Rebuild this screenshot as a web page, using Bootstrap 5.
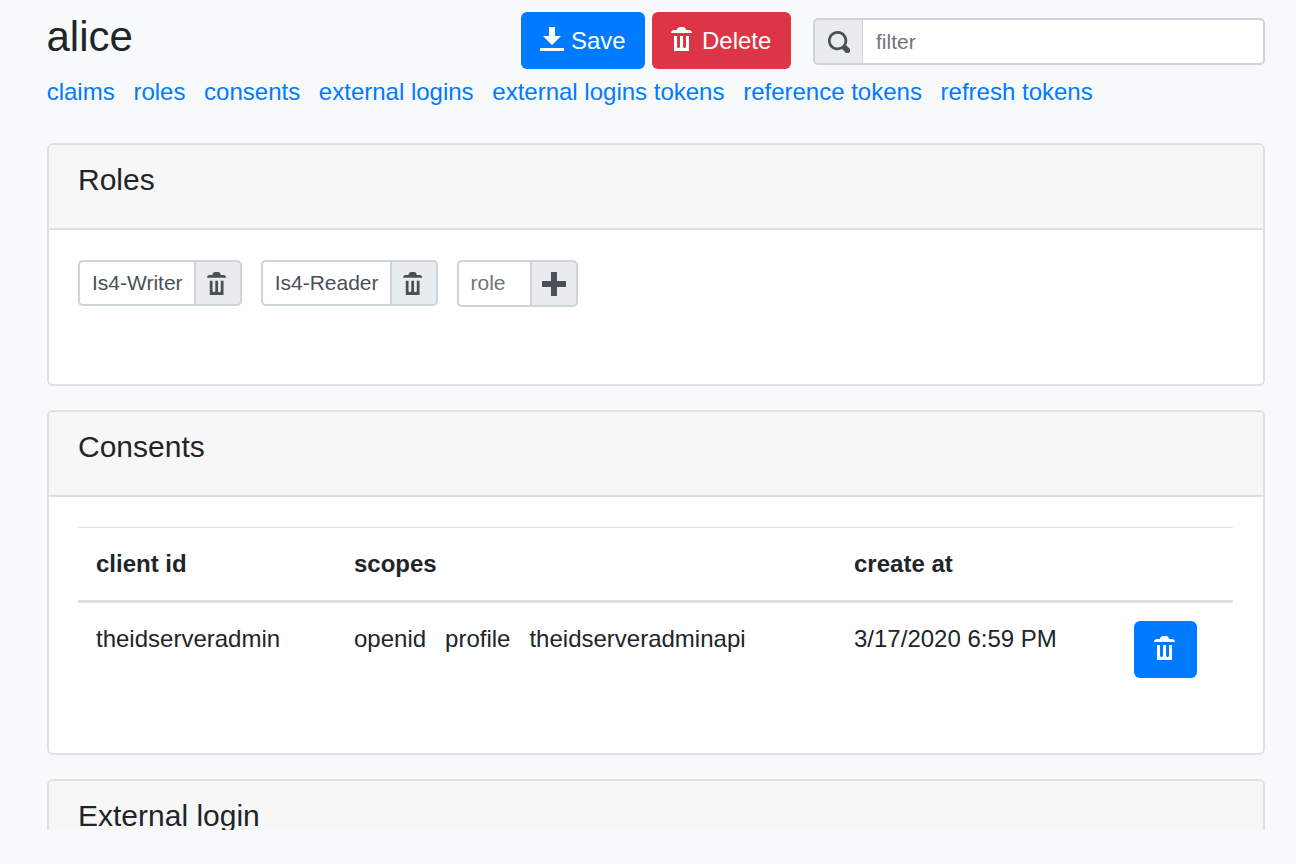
<!DOCTYPE html>
<html lang="en">
<head>
<meta charset="utf-8">
<title>alice</title>
<link href="https://cdn.jsdelivr.net/npm/bootstrap@5.3.0/dist/css/bootstrap.min.css" rel="stylesheet">
<style>
html,body{height:100%;overflow:hidden}
body{background:#f8f9fa;font-family:"Liberation Sans",Arial,sans-serif;font-size:24px;color:#212529;line-height:36px}
.ui-viewport{height:830px;overflow:hidden;padding:0 31px 0 46px}
.ui-head{height:69px;padding-top:12px}
.ui-title{font-size:42px;line-height:50px;font-weight:400;margin:0;padding-left:.5px;width:475px}
.ui-btn{height:57px;font-size:24px;line-height:36px;border-radius:6px;padding:0 19px;border:0;display:flex;align-items:center;color:#fff}
.ui-save{background:#007bff;width:124px;margin-right:7px}
.ui-save:hover{background:#007bff;color:#fff}
.ui-del{background:#dc3545;width:139px;margin-right:22px}
.ui-del:hover{background:#dc3545;color:#fff}
.ui-ico{fill:currentColor;flex:none}
.ui-btn .ui-ico{margin-top:-4px}
.ui-gap-s{margin-right:7px}
.ui-gap-l{margin-right:7px}
.ui-search{width:452px;height:47px;margin-top:6px;flex-wrap:nowrap}
.ui-addon{background:#e9ecef;border:2px solid #ced4da;color:#495057;padding:0;display:flex;align-items:center;justify-content:center;border-radius:5px}
.ui-search .ui-addon{width:51px;height:47px;border-radius:5px 0 0 5px}
.ui-search .form-control{height:47px;font-size:21px;border:2px solid #ced4da;border-left-width:0;color:#495057;padding:0 13px;border-radius:0 5px 5px 0;background:#fff;font-family:inherit}
.form-control::placeholder{color:#6c757d;opacity:1}
.ui-links{gap:18.7px;height:45px;margin-top:5px;margin-left:.7px;align-items:flex-start}
.ui-links a{color:#007bff;text-decoration:none;line-height:36px}
.ui-card{border:2px solid #dee0e2;border-radius:6px;background:#fff;margin:0 0 24px 1px;--bs-card-border-width:0}
.ui-card-top{margin-top:24px}
.ui-card .card-header{height:85px;padding:0 30px 0 29px;background:#f7f7f7;border:0;border-bottom:2px solid #dcdee0;border-radius:4px 4px 0 0;font-size:30px;line-height:36px;display:flex;align-items:center;margin:0}
.ui-card .card-header h5{font-size:30px;line-height:36px;margin:-14px 0 0;font-weight:400;font-family:inherit}
.ui-card-body{padding:30px 30px 30px 29px}
.ui-roles{height:154px;gap:19px;align-items:flex-start;font-size:21px}
.ui-tag{display:flex;height:46px;color:#495057}
.ui-tag-text{border:2px solid #ced4da;border-right-width:0;border-radius:5px 0 0 5px;background:#fff;height:100%;padding:0 11px 0 12px;line-height:42px;white-space:nowrap}
.ui-tag-ph{color:#6c757d;width:73px}
.ui-tag .ui-addon{width:48px;height:100%;border-radius:0 5px 5px 0}
.ui-tag-add{height:47px}
.ui-table{width:1155px;margin:0;table-layout:fixed;--bs-table-bg:transparent;font-size:24px;color:#212529;border-collapse:collapse}
.ui-table th,.ui-table td{padding:18px;border:0;line-height:36px;box-shadow:none;vertical-align:top}
.ui-table thead th{border-top:1px solid #dee2e6;border-bottom:3px solid #dee2e6;font-weight:700;height:74px}
.ui-table td.ui-act{padding:18px 0 0 18px}
.ui-c1{width:258px}
.ui-c2{width:500px}
.ui-c3{width:280px}
.ui-c4{width:117px}
.ui-scopes{display:flex;gap:19px}
.ui-trash{width:63px;background:#007bff;justify-content:center;padding:0;margin-bottom:0}
.ui-trash:hover{background:#007bff;color:#fff}
.ui-table-wrap{height:196px}
</style>
</head>
<body>
<svg width="0" height="0" class="position-absolute">
<defs>
<symbol id="i-trash" viewBox="0 0 8 8" preserveAspectRatio="none"><path d="M3 0c-.55 0-1 .45-1 1h-1c-.55 0-1 .45-1 1h7c0-.55-.45-1-1-1h-1c0-.55-.45-1-1-1h-1zm-2 3v4.81c0 .11.08.19.19.19h4.63c.11 0 .19-.08.19-.19v-4.81h-1v3.5c0 .28-.22.5-.5.5s-.5-.22-.5-.5v-3.5h-1v3.5c0 .28-.22.5-.5.5s-.5-.22-.5-.5v-3.5h-1z"/></symbol>
<symbol id="i-down" viewBox="0 0 8 8"><path d="M3 0v3h-2l3 3 3-3h-2v-3h-2zm-3 7v1h8v-1h-8z"/></symbol>
<symbol id="i-search" viewBox="0 0 8 8"><path d="M3.5 0c-1.93 0-3.5 1.57-3.5 3.5s1.57 3.5 3.5 3.5c.59 0 1.17-.14 1.66-.41a1 1 0 0 0 .13.13l1 1a1.02 1.02 0 1 0 1.44-1.44l-1-1a1 1 0 0 0-.16-.13c.27-.49.44-1.06.44-1.66 0-1.93-1.57-3.5-3.5-3.5zm0 1c1.39 0 2.5 1.11 2.5 2.5 0 .66-.24 1.27-.66 1.72-.01.01-.02.02-.03.03a1 1 0 0 0-.13.13c-.44.4-1.04.63-1.69.63-1.39 0-2.5-1.11-2.5-2.5s1.11-2.5 2.5-2.5z"/></symbol>
<symbol id="i-plus" viewBox="0 0 8 8"><path d="M3 0v3h-3v2h3v3h2v-3h3v-2h-3v-3h-2z"/></symbol>
</defs>
</svg>
<div class="ui-viewport">
  <div class="ui-head d-flex align-items-start">
    <h3 class="ui-title">alice</h3>
    <button type="button" class="btn ui-btn ui-save"><svg class="ui-ico ui-gap-s" width="24" height="24"><use href="#i-down"/></svg>Save</button>
    <button type="button" class="btn ui-btn ui-del"><svg class="ui-ico ui-gap-l" width="24" height="24"><use href="#i-trash"/></svg>Delete</button>
    <div class="input-group ui-search">
      <span class="input-group-text ui-addon"><svg class="ui-ico" width="22" height="22"><use href="#i-search"/></svg></span>
      <input type="text" class="form-control" placeholder="filter">
    </div>
  </div>
  <nav class="d-flex ui-links">
    <a href="#">claims</a><a href="#">roles</a><a href="#">consents</a><a href="#">external logins</a><a href="#">external logins tokens</a><a href="#">reference tokens</a><a href="#">refresh tokens</a>
  </nav>
  <div class="card ui-card ui-card-top">
    <div class="card-header"><h5>Roles</h5></div>
    <div class="ui-card-body d-flex ui-roles">
      <div class="ui-tag"><div class="ui-tag-text">Is4-Writer</div><span class="ui-addon"><svg class="ui-ico" width="22" height="23"><use href="#i-trash"/></svg></span></div>
      <div class="ui-tag"><div class="ui-tag-text">Is4-Reader</div><span class="ui-addon"><svg class="ui-ico" width="22" height="23"><use href="#i-trash"/></svg></span></div>
      <div class="ui-tag ui-tag-add"><div class="ui-tag-text ui-tag-ph">role</div><span class="ui-addon"><svg class="ui-ico" width="24" height="24"><use href="#i-plus"/></svg></span></div>
    </div>
  </div>
  <div class="card ui-card">
    <div class="card-header"><h5>Consents</h5></div>
    <div class="ui-card-body">
      <div class="ui-table-wrap">
        <table class="table ui-table">
          <colgroup><col class="ui-c1"><col class="ui-c2"><col class="ui-c3"><col class="ui-c4"></colgroup>
          <thead><tr><th>client id</th><th>scopes</th><th>create at</th><th></th></tr></thead>
          <tbody><tr>
            <td>theidserveradmin</td>
            <td><div class="ui-scopes"><span>openid</span><span>profile</span><span>theidserveradminapi</span></div></td>
            <td>3/17/2020 6:59 PM</td>
            <td class="ui-act"><button type="button" class="btn ui-btn ui-trash"><svg class="ui-ico" width="24" height="24"><use href="#i-trash"/></svg></button></td>
          </tr></tbody>
        </table>
      </div>
    </div>
  </div>
  <div class="card ui-card">
    <div class="card-header"><h5>External login</h5></div>
  </div>
</div>
</body>
</html>
